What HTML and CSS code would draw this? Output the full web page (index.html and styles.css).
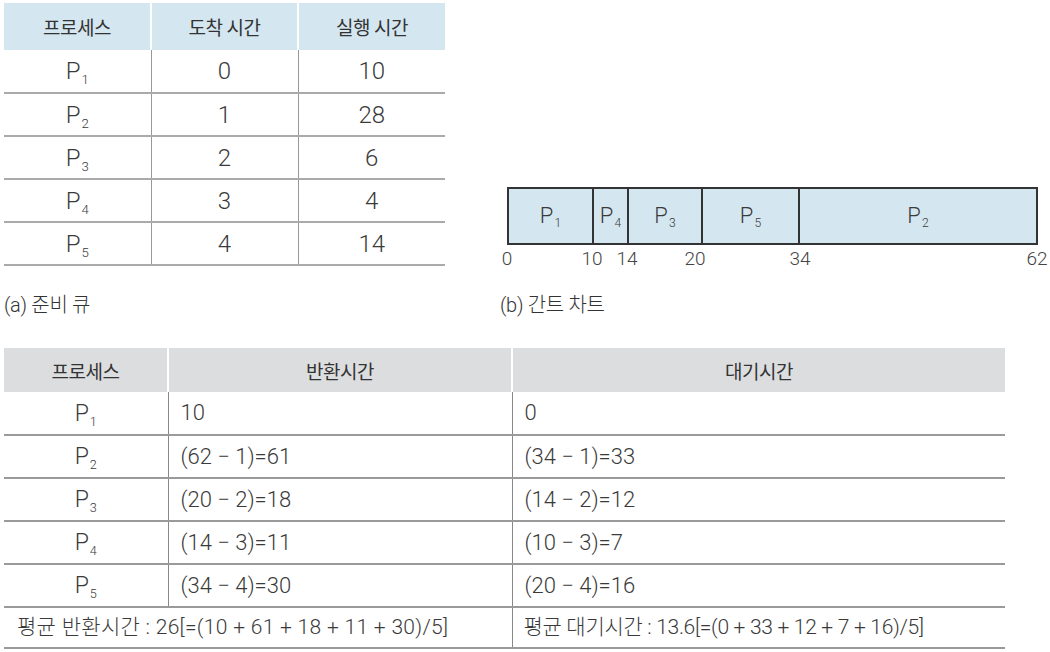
FILE: index.html
```html
<!DOCTYPE html>
<html lang="ko">
<head>
<meta charset="utf-8">
<title>SJF 스케줄링</title>
<link rel="stylesheet" href="styles.css">
</head>
<body>
<div class="page">
  <div class="top">
    <table class="queue">
      <colgroup><col><col><col></colgroup>
      <thead>
        <tr><th>프로세스</th><th>도착 시간</th><th>실행 시간</th></tr>
      </thead>
      <tbody>
        <tr><td><span class="p">P<sub>1</sub></span></td><td>0</td><td>10</td></tr>
        <tr><td><span class="p">P<sub>2</sub></span></td><td>1</td><td>28</td></tr>
        <tr><td><span class="p">P<sub>3</sub></span></td><td>2</td><td>6</td></tr>
        <tr><td><span class="p">P<sub>4</sub></span></td><td>3</td><td>4</td></tr>
        <tr><td><span class="p">P<sub>5</sub></span></td><td>4</td><td>14</td></tr>
      </tbody>
    </table>

    <div class="gantt">
      <div class="bar">
        <div class="seg" style="width:83px"><span class="p">P<sub>1</sub></span></div>
        <div class="seg div" style="width:35px"><span class="p">P<sub>4</sub></span></div>
        <div class="seg div" style="width:74px"><span class="p">P<sub>3</sub></span></div>
        <div class="seg div" style="width:97px"><span class="p">P<sub>5</sub></span></div>
        <div class="seg div last"><span class="p">P<sub>2</sub></span></div>
      </div>
      <div class="axis">
        <span class="tick" style="left:0px">0</span>
        <span class="tick" style="left:85px">10</span>
        <span class="tick" style="left:120px">14</span>
        <span class="tick" style="left:188px">20</span>
        <span class="tick" style="left:293px">34</span>
        <span class="tick" style="left:530px">62</span>
      </div>
    </div>

    <div class="caption">(a) 준비 큐</div>
    <div class="caption">(b) 간트 차트</div>
  </div>

  <table class="result">
    <colgroup><col class="c1"><col class="c2"><col class="c3"></colgroup>
    <thead>
      <tr><th>프로세스</th><th>반환시간</th><th>대기시간</th></tr>
    </thead>
    <tbody>
      <tr><td class="pc"><span class="p">P<sub>1</sub></span></td><td>10</td><td>0</td></tr>
      <tr><td class="pc"><span class="p">P<sub>2</sub></span></td><td>(62 − 1)=61</td><td>(34 − 1)=33</td></tr>
      <tr><td class="pc"><span class="p">P<sub>3</sub></span></td><td>(20 − 2)=18</td><td>(14 − 2)=12</td></tr>
      <tr><td class="pc"><span class="p">P<sub>4</sub></span></td><td>(14 − 3)=11</td><td>(10 − 3)=7</td></tr>
      <tr><td class="pc"><span class="p">P<sub>5</sub></span></td><td>(34 − 4)=30</td><td>(20 − 4)=16</td></tr>
      <tr class="avg"><td colspan="2" class="avg1">평균 반환시간 : 26[=(10 + 61 + 18 + 11 + 30)/5]</td><td class="avg2">평균 대기시간 : 13.6[=(0 + 33 + 12 + 7 + 16)/5]</td></tr>
    </tbody>
  </table>
</div>
</body>
</html>
```

FILE: styles.css
```css
* { box-sizing: border-box; }
html, body { margin: 0; padding: 0; background: #fff; }
body {
  font-family: Roboto, "Noto Sans CJK KR", sans-serif;
  font-weight: 300;
  color: #3a3a3a;
}
.page { padding: 3px 0 0 4px; width: 1050px; }

.top {
  display: grid;
  grid-template-columns: 496px 530px;
  grid-template-rows: auto auto;
}

/* queue table */
.queue {
  align-self: start;
  width: 441px;
  border-collapse: collapse;
  table-layout: fixed;
}
.queue th {
  height: 47px;
  background: #d4e6ef;
  font-weight: 400;
  font-size: 19px;
  letter-spacing: -0.5px;
  color: #333;
  border-left: 2px solid #fff;
  padding: 0;
}
.queue th:first-child { border-left: none; }
.queue td {
  height: 43px;
  line-height: 1;
  text-align: center;
  font-size: 24px;
  border-bottom: 2px solid #aaa;
  border-left: 1px solid #999;
  padding: 0;
}
.queue td:first-child { border-left: none; }

.p sub {
  font-size: 0.55em;
  vertical-align: -0.4em;
  line-height: 0;
  margin-left: 1px;
}

/* gantt */
.gantt {
  padding: 184px 0 0 7px;
  position: relative;
}
.bar {
  display: flex;
  width: 531px;
  height: 58px;
  border: 2px solid #333;
  background: #d4e6f0;
}
.seg {
  display: flex;
  align-items: center;
  justify-content: center;
  font-size: 22px;
  padding-bottom: 2px;
}
.seg.div { border-left: 2px solid #333; }
.seg.last { flex: 1; }
.axis {
  position: relative;
  height: 24px;
  margin-top: 2px;
}
.tick {
  position: absolute;
  top: 0;
  transform: translateX(-50%);
  font-size: 19px;
  line-height: 24px;
  color: #444;
}

.caption {
  margin-top: 22px;
  font-size: 20px;
  line-height: 24px;
  letter-spacing: -0.3px;
  color: #333;
}

/* result table */
.result {
  margin-top: 31px;
  width: 1001px;
  border-collapse: collapse;
  table-layout: fixed;
}
.result .c1 { width: 164px; }
.result .c2 { width: 344px; }
.result .c3 { width: 493px; }
.result th {
  height: 44px;
  background: #dcdddf;
  font-weight: 400;
  font-size: 19px;
  letter-spacing: -0.5px;
  color: #333;
  border-left: 2px solid #fff;
  padding: 0;
}
.result th:first-child { border-left: none; }
.result td {
  height: 43px;
  line-height: 1;
  font-size: 22px;
  border-bottom: 2px solid #9a9a9a;
  border-left: 1px solid #888;
  padding: 0 0 0 12px;
}
.result td:first-child { border-left: none; }
.result td.pc { text-align: center; padding: 0; font-size: 23px; }
.result tr.avg td { height: 41px; font-size: 21px; }
.result td.avg1 { padding-left: 13px; letter-spacing: 0.3px; }
.result td.avg2 { padding-left: 11px; letter-spacing: -0.3px; }
```
